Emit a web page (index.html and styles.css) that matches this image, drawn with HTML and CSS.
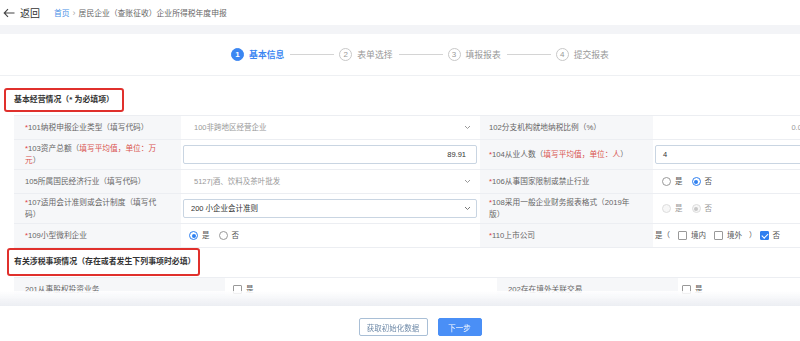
FILE: index.html
```html
<!DOCTYPE html>
<html lang="zh-CN">
<head>
  <meta charset="UTF-8">
  <meta name="viewport" content="width=device-width, initial-scale=1.0">
  <title>企业所得税年度申报</title>
  <link rel="stylesheet" href="styles.css">
</head>
<body>
  <div class="page">
    <!-- 顶部返回 + 面包屑 -->
    <div class="topbar">
      <span class="back">
        <svg width="12" height="10" viewBox="0 0 12 10"><path d="M11.5 5H1.5M5 1.2L1.2 5 5 8.8" fill="none" stroke="#444" stroke-width="1.1"/></svg>
        <span class="back-text">返回</span>
      </span>
      <div class="crumb">
        <span class="crumb-home">首页</span>
        <span class="crumb-sep">›</span>
        <span>居民企业（查账征收）企业所得税年度申报</span>
      </div>
    </div>

    <div class="panel">
      <!-- 步骤条 -->
      <div class="steps">
        <div class="step active"><span class="step-num">1</span><span class="step-name">基本信息</span></div>
        <span class="step-line"></span>
        <div class="step"><span class="step-num">2</span><span class="step-name">表单选择</span></div>
        <span class="step-line"></span>
        <div class="step"><span class="step-num">3</span><span class="step-name">填报报表</span></div>
        <span class="step-line"></span>
        <div class="step"><span class="step-num">4</span><span class="step-name">提交报表</span></div>
      </div>

      <!-- 基本经营情况 -->
      <div class="section">
        <div class="section-title">基本经营情况（* 为必填项）</div>
      </div>
      <table class="form-table basic">
        <colgroup><col class="c1"><col class="c2"><col class="c3"><col class="c4"></colgroup>
        <tr class="row-s">
          <td class="label"><span class="req">*</span>101纳税申报企业类型（填写代码）</td>
          <td><div class="select plain"><span>100非跨地区经营企业</span><svg width="7" height="5" viewBox="0 0 7 5"><path d="M1 1l2.5 2.5L6 1" fill="none" stroke="#999" stroke-width="1"/></svg></div></td>
          <td class="label label-r">102分支机构就地纳税比例（%）</td>
          <td class="num muted">0.00</td>
        </tr>
        <tr class="row-l">
          <td class="label"><span class="req">*</span>103资产总额（<span class="hint">填写平均值，单位：万元</span>）</td>
          <td><div class="input right">89.91</div></td>
          <td class="label label-r"><span class="req">*</span>104从业人数（<span class="hint">填写平均值，单位：人</span>）</td>
          <td><div class="input input-r">4</div></td>
        </tr>
        <tr class="row-s">
          <td class="label">105所属国民经济行业（填写代码）</td>
          <td><div class="select plain"><span>5127|酒、饮料及茶叶批发</span><svg width="7" height="5" viewBox="0 0 7 5"><path d="M1 1l2.5 2.5L6 1" fill="none" stroke="#999" stroke-width="1"/></svg></div></td>
          <td class="label label-r"><span class="req">*</span>106从事国家限制或禁止行业</td>
          <td>
            <div class="choices">
              <span class="radio"></span><span class="opt">是</span>
              <span class="radio checked"></span><span class="opt">否</span>
            </div>
          </td>
        </tr>
        <tr class="row-l">
          <td class="label"><span class="req">*</span>107适用会计准则或会计制度（填写代码）</td>
          <td><div class="select"><span>200 小企业会计准则</span><svg width="7" height="5" viewBox="0 0 7 5"><path d="M1 1l2.5 2.5L6 1" fill="none" stroke="#777" stroke-width="1"/></svg></div></td>
          <td class="label label-r"><span class="req">*</span>108采用一般企业财务报表格式（2019年版）</td>
          <td>
            <div class="choices disabled">
              <span class="radio"></span><span class="opt">是</span>
              <span class="radio checked"></span><span class="opt">否</span>
            </div>
          </td>
        </tr>
        <tr class="row-s">
          <td class="label"><span class="req">*</span>109小型微利企业</td>
          <td>
            <div class="choices choices-l">
              <span class="radio checked"></span><span class="opt">是</span>
              <span class="radio"></span><span class="opt">否</span>
            </div>
          </td>
          <td class="label label-r"><span class="req">*</span>110上市公司</td>
          <td>
            <div class="listed">
              <span>是（</span>
              <span class="check"></span><span>境内</span>
              <span class="check"></span><span>境外</span>
              <span class="paren">）</span>
              <span class="check checked"></span><span>否</span>
            </div>
          </td>
        </tr>
      </table>

      <!-- 有关涉税事项情况 -->
      <div class="section section-2">
        <div class="section-title">有关涉税事项情况（存在或者发生下列事项时必填）</div>
      </div>
      <table class="form-table extra">
        <colgroup><col class="d1"><col class="d2"><col class="d3"><col class="d4"></colgroup>
        <tr class="row-s">
          <td class="label">201从事股权投资业务</td>
          <td><div class="choices choices-x"><span class="check"></span><span class="opt">是</span></div></td>
          <td class="label">202存在境外关联交易</td>
          <td><div class="choices choices-y"><span class="check"></span><span class="opt">是</span></div></td>
        </tr>
        <tr class="row-s">
          <td class="label">203选择采用的境外所得抵免方式</td>
          <td></td>
          <td class="label">204有限合伙制创业投资企业的法人合伙人</td>
          <td></td>
        </tr>
      </table>
    </div>

    <!-- 底部操作 -->
    <div class="footer">
      <button class="btn btn-ghost">获取初始化数据</button>
      <button class="btn btn-primary">下一步</button>
    </div>
  </div>
</body>
</html>
```

FILE: styles.css
```css
/* Reset */
* {
  margin: 0;
  padding: 0;
  box-sizing: border-box;
}

html, body {
  overflow: hidden;
  background: #f3f4f7;
}

body {
  font-family: "Liberation Sans", "Noto Sans CJK SC", sans-serif;
  color: #555;
  font-size: 7.5px;
}

.page {
  width: 840px;
}

/* 顶部 */
.topbar {
  height: 25px;
  background: #fff;
  display: flex;
  align-items: center;
  padding-left: 3px;
}

.back {
  display: flex;
  align-items: center;
  gap: 5px;
  color: #333;
}

.back-text {
  font-size: 10px;
}

.crumb {
  margin-left: 14px;
  font-size: 7.8px;
  color: #666;
  display: flex;
  align-items: center;
  gap: 3px;
}

.crumb-home {
  color: #4a8fe6;
}

.crumb-sep {
  color: #aaa;
  font-size: 9px;
}

/* 内容面板 */
.panel {
  margin-top: 9px;
  background: #fff;
  height: 400px;
}

/* 步骤条 */
.steps {
  height: 42px;
  border-bottom: 1px solid #eef0f3;
  display: flex;
  justify-content: center;
  align-items: center;
}

.step {
  display: flex;
  align-items: center;
  gap: 5px;
  color: #999;
}

.step-num {
  width: 13px;
  height: 13px;
  border: 1px solid #c8c8c8;
  border-radius: 50%;
  display: flex;
  align-items: center;
  justify-content: center;
  font-size: 8px;
  color: #999;
}

.step-name {
  font-size: 8.8px;
}

.step.active .step-num {
  background: #3b86f2;
  border-color: #3b86f2;
  color: #fff;
  font-weight: bold;
}

.step.active .step-name {
  color: #3b86f2;
  font-weight: bold;
}

.step-line {
  width: 44px;
  height: 1px;
  background: #d4d4d4;
  margin: 0 5px 0 6px;
}

/* 分节标题（红框） */
.section {
  padding: 12px 0 0 4px;
}

.section-title {
  display: inline-block;
  border: 2px solid #e0302c;
  border-radius: 3px;
  padding: 5px 8px 5px 8px;
  font-size: 7.9px;
  font-weight: bold;
  color: #333;
  line-height: 10px;
}

.section-2 {
  padding: 0 0 0 7px;
}

.section-2 .section-title {
  padding: 7px 2px 7px 5px;
}

/* 表格 */
.form-table {
  margin: 3px 0 0 14px;
  width: 802px;
  border-collapse: collapse;
  table-layout: fixed;
}

.form-table td {
  border-top: 1px solid #eceef2;
  border-bottom: 1px solid #eceef2;
  padding: 0;
  vertical-align: middle;
  line-height: 12px;
}

.basic .c1 { width: 167px; }
.basic .c2 { width: 299px; }
.basic .c3 { width: 173px; }
.basic .c4 { width: 163px; }

.extra .d1 { width: 211px; }
.extra .d2 { width: 272px; }
.extra .d3 { width: 181px; }
.extra .d4 { width: 138px; }

.extra {
  margin-top: 1px;
}

.row-s td { height: 24px; }
.row-l td { height: 30px; }

.form-table .label {
  background: #f6f7f9;
  color: #666;
  font-size: 7.7px;
  padding: 0 22px 0 11px;
}

.form-table .label-r {
  padding: 0 18px 0 9px;
}

.req {
  color: #e0443f;
}

.hint {
  color: #d9534f;
}

.num {
  text-align: right;
  padding-right: 10px !important;
}

.muted {
  color: #999;
}

/* 下拉框 / 输入框 */
.select {
  margin: 0 3px 0 2px;
  height: 19px;
  border: 1px solid #c9d5e2;
  border-radius: 2px;
  display: flex;
  align-items: center;
  justify-content: space-between;
  padding: 0 5px 0 7px;
  color: #333;
}

.select.plain {
  border-color: transparent;
  padding-left: 10px;
  color: #999;
}

.input {
  margin: 0 3px 0 2px;
  height: 19px;
  border: 1px solid #c9d5e2;
  border-radius: 2px;
  display: flex;
  align-items: center;
  padding: 0 7px;
  color: #333;
}

.input.right {
  justify-content: flex-end;
  padding-right: 10px;
}

/* 单选 / 复选 */
.choices {
  display: flex;
  align-items: center;
  padding-left: 9px;
  color: #555;
}

.choices-l {
  padding-left: 8px;
}

.opt {
  margin: 0 9px 0 4px;
}

.radio {
  width: 9px;
  height: 9px;
  border: 1px solid #999;
  border-radius: 50%;
  display: inline-block;
  position: relative;
  background: #fff;
}

.radio.checked {
  border-color: #2f80f0;
}

.radio.checked::after {
  content: "";
  position: absolute;
  left: 1.5px;
  top: 1.5px;
  width: 4px;
  height: 4px;
  border-radius: 50%;
  background: #2f80f0;
}

.choices.disabled {
  color: #999;
}

.choices.disabled .radio {
  border-color: #ddd;
  background: #f7f7f7;
}

.choices.disabled .radio.checked::after {
  background: #c8c8c8;
}

.check {
  width: 9px;
  height: 9px;
  border: 1px solid #999;
  border-radius: 1px;
  display: inline-block;
  position: relative;
  background: #fff;
}

.check.checked {
  background: #2f80f0;
  border-color: #2f80f0;
}

.check.checked::after {
  content: "";
  position: absolute;
  left: 2px;
  top: 0;
  width: 2.5px;
  height: 5px;
  border: solid #fff;
  border-width: 0 1.3px 1.3px 0;
  transform: rotate(45deg);
}

.listed {
  display: flex;
  align-items: center;
  padding-left: 2px;
  color: #555;
}

.listed .check {
  margin: 0 4px 0 8px;
}

.listed .paren {
  margin-left: 7px;
}

.listed .check.checked {
  margin-left: 3px;
}

.choices-x {
  padding-left: 8px;
}

.choices-y {
  padding-left: 4px;
}

/* 底部操作栏 */
.footer {
  position: fixed;
  left: 0;
  bottom: 0;
  width: 840px;
  height: 50px;
  background: linear-gradient(to bottom, rgba(255, 255, 255, 0.85) 0, #eceef3 15px, #fff 15px);
  display: flex;
  justify-content: center;
  align-items: flex-start;
  gap: 10px;
  padding-top: 27px;
}

.btn {
  height: 18px;
  border-radius: 2px;
  font-family: "Liberation Sans", "Noto Sans CJK SC", sans-serif;
  font-size: 7.5px;
  cursor: pointer;
}

.btn-ghost {
  width: 69px;
  background: #fff;
  border: 1px solid #a9bfd6;
  color: #6f8aa8;
}

.btn-primary {
  width: 44px;
  background: #4a8ff6;
  border: 1px solid #4a8ff6;
  color: #fff;
}
```
